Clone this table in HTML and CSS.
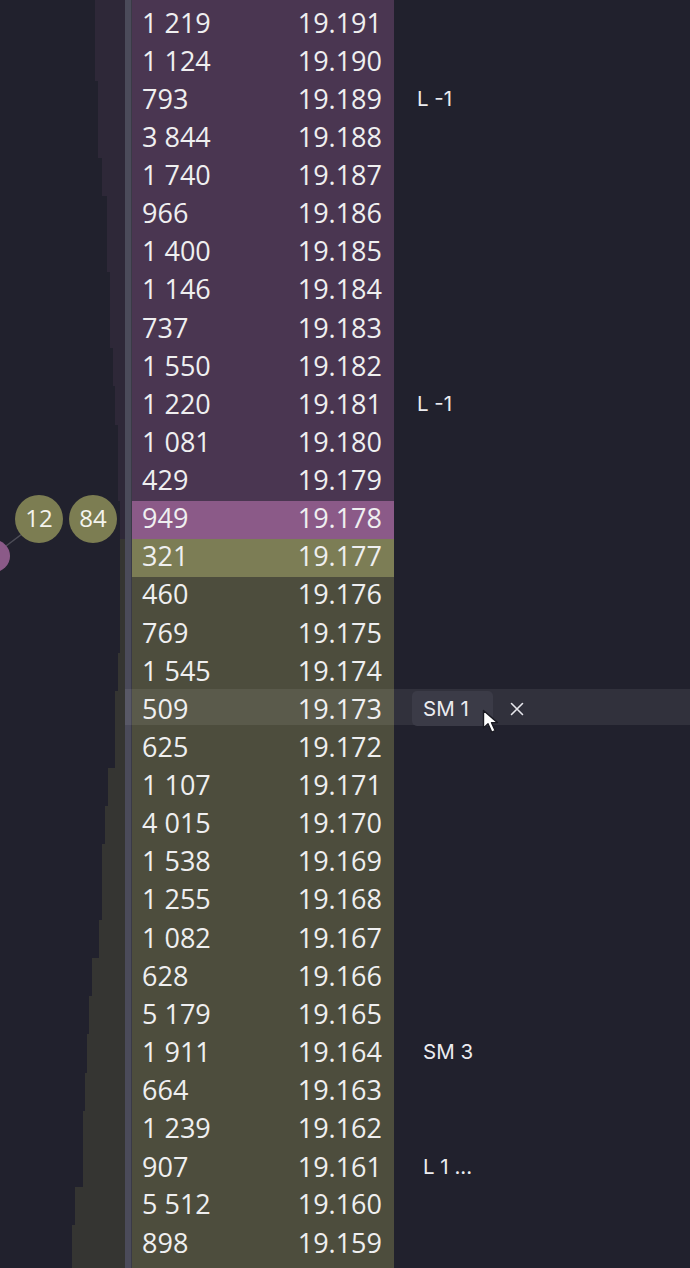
FILE: index.html
```html
<!DOCTYPE html>
<html>
<head>
<meta charset="utf-8">
<link rel="stylesheet" href="styles.css">
</head>
<body>
<div class="ladder">
  <div class="row edge ask"><div class="vp"><i class="bar" style="width:30px"></i></div><div class="axis"></div><div class="cells"></div><div class="note"></div></div>

  <div class="row ask"><div class="vp"><i class="bar" style="width:30px"></i></div><div class="axis"></div><div class="cells"><span>1 219</span><span>19.191</span></div><div class="note"></div></div>
  <div class="row ask"><div class="vp"><i class="bar" style="width:30px"></i></div><div class="axis"></div><div class="cells"><span>1 124</span><span>19.190</span></div><div class="note"></div></div>
  <div class="row ask"><div class="vp"><i class="bar" style="width:27px"></i></div><div class="axis"></div><div class="cells"><span>793</span><span>19.189</span></div><div class="note"><span class="label plain">L -1</span></div></div>
  <div class="row ask"><div class="vp"><i class="bar" style="width:27px"></i></div><div class="axis"></div><div class="cells"><span>3 844</span><span>19.188</span></div><div class="note"></div></div>
  <div class="row ask"><div class="vp"><i class="bar" style="width:23px"></i></div><div class="axis"></div><div class="cells"><span>1 740</span><span>19.187</span></div><div class="note"></div></div>
  <div class="row ask"><div class="vp"><i class="bar" style="width:18px"></i></div><div class="axis"></div><div class="cells"><span>966</span><span>19.186</span></div><div class="note"></div></div>
  <div class="row ask"><div class="vp"><i class="bar" style="width:18px"></i></div><div class="axis"></div><div class="cells"><span>1 400</span><span>19.185</span></div><div class="note"></div></div>
  <div class="row ask"><div class="vp"><i class="bar" style="width:15px"></i></div><div class="axis"></div><div class="cells"><span>1 146</span><span>19.184</span></div><div class="note"></div></div>
  <div class="row ask"><div class="vp"><i class="bar" style="width:15px"></i></div><div class="axis"></div><div class="cells"><span>737</span><span>19.183</span></div><div class="note"></div></div>
  <div class="row ask"><div class="vp"><i class="bar" style="width:12px"></i></div><div class="axis"></div><div class="cells"><span>1 550</span><span>19.182</span></div><div class="note"></div></div>
  <div class="row ask"><div class="vp"><i class="bar" style="width:10px"></i></div><div class="axis"></div><div class="cells"><span>1 220</span><span>19.181</span></div><div class="note"><span class="label plain">L -1</span></div></div>
  <div class="row ask"><div class="vp"><i class="bar" style="width:7px"></i></div><div class="axis"></div><div class="cells"><span>1 081</span><span>19.180</span></div><div class="note"></div></div>
  <div class="row ask"><div class="vp"><i class="bar" style="width:7px"></i></div><div class="axis"></div><div class="cells"><span>429</span><span>19.179</span></div><div class="note"></div></div>
  <div class="row ask best"><div class="vp"><i class="bar" style="width:5px"></i></div><div class="axis"></div><div class="cells"><span>949</span><span>19.178</span></div><div class="note"></div></div>
  <div class="row bid best"><div class="vp"><i class="bar" style="width:5px"></i></div><div class="axis"></div><div class="cells"><span>321</span><span>19.177</span></div><div class="note"></div></div>
  <div class="row bid"><div class="vp"><i class="bar" style="width:5px"></i></div><div class="axis"></div><div class="cells"><span>460</span><span>19.176</span></div><div class="note"></div></div>
  <div class="row bid"><div class="vp"><i class="bar" style="width:5px"></i></div><div class="axis"></div><div class="cells"><span>769</span><span>19.175</span></div><div class="note"></div></div>
  <div class="row bid"><div class="vp"><i class="bar" style="width:7px"></i></div><div class="axis"></div><div class="cells"><span>1 545</span><span>19.174</span></div><div class="note"></div></div>
  <div class="row bid hover"><div class="vp"><i class="bar" style="width:10px"></i></div><div class="axis"></div><div class="cells"><span>509</span><span>19.173</span></div><div class="note"><span class="label tag">SM 1</span><svg class="close" width="14" height="14" viewBox="0 0 14 14"><path d="M1.5 1.5L12.5 12.5M12.5 1.5L1.5 12.5" stroke="#e6e6ec" stroke-width="1.6" stroke-linecap="round"/></svg>
    <svg class="cursor" width="22" height="26" viewBox="0 0 22 26"><path d="M1.5 1.5 L1.5 19 L6 14.8 L9.8 23.2 L13.2 21.7 L9.5 13.6 L15.5 13.6 Z" fill="#ffffff" stroke="#1a1a22" stroke-width="1.4" stroke-linejoin="round"/></svg></div></div>
  <div class="row bid"><div class="vp"><i class="bar" style="width:10px"></i></div><div class="axis"></div><div class="cells"><span>625</span><span>19.172</span></div><div class="note"></div></div>
  <div class="row bid"><div class="vp"><i class="bar" style="width:17px"></i></div><div class="axis"></div><div class="cells"><span>1 107</span><span>19.171</span></div><div class="note"></div></div>
  <div class="row bid"><div class="vp"><i class="bar" style="width:20px"></i></div><div class="axis"></div><div class="cells"><span>4 015</span><span>19.170</span></div><div class="note"></div></div>
  <div class="row bid"><div class="vp"><i class="bar" style="width:23px"></i></div><div class="axis"></div><div class="cells"><span>1 538</span><span>19.169</span></div><div class="note"></div></div>
  <div class="row bid"><div class="vp"><i class="bar" style="width:23px"></i></div><div class="axis"></div><div class="cells"><span>1 255</span><span>19.168</span></div><div class="note"></div></div>
  <div class="row bid"><div class="vp"><i class="bar" style="width:26px"></i></div><div class="axis"></div><div class="cells"><span>1 082</span><span>19.167</span></div><div class="note"></div></div>
  <div class="row bid"><div class="vp"><i class="bar" style="width:33px"></i></div><div class="axis"></div><div class="cells"><span>628</span><span>19.166</span></div><div class="note"></div></div>
  <div class="row bid"><div class="vp"><i class="bar" style="width:36px"></i></div><div class="axis"></div><div class="cells"><span>5 179</span><span>19.165</span></div><div class="note"></div></div>
  <div class="row bid"><div class="vp"><i class="bar" style="width:38px"></i></div><div class="axis"></div><div class="cells"><span>1 911</span><span>19.164</span></div><div class="note"><span class="label">SM 3</span></div></div>
  <div class="row bid"><div class="vp"><i class="bar" style="width:40px"></i></div><div class="axis"></div><div class="cells"><span>664</span><span>19.163</span></div><div class="note"></div></div>
  <div class="row bid"><div class="vp"><i class="bar" style="width:42px"></i></div><div class="axis"></div><div class="cells"><span>1 239</span><span>19.162</span></div><div class="note"></div></div>
  <div class="row bid"><div class="vp"><i class="bar" style="width:42px"></i></div><div class="axis"></div><div class="cells"><span>907</span><span>19.161</span></div><div class="note"><span class="label">L 1 ...</span></div></div>
  <div class="row bid"><div class="vp"><i class="bar" style="width:50px"></i></div><div class="axis"></div><div class="cells"><span>5 512</span><span>19.160</span></div><div class="note"></div></div>
  <div class="row bid"><div class="vp"><i class="bar" style="width:53px"></i></div><div class="axis"></div><div class="cells"><span>898</span><span>19.159</span></div><div class="note"></div></div>
  <div class="row edge bid"><div class="vp"><i class="bar" style="width:53px"></i></div><div class="axis"></div><div class="cells"></div><div class="note"></div></div>
</div>

<div class="marks">
  <svg class="link" width="40" height="40" viewBox="0 0 40 40"><path d="M4 26 L20 14" stroke="#4e4e58" stroke-width="1.5"/></svg>
  <div class="dot pink"></div>
  <div class="dot olive d12">12</div>
  <div class="dot olive d84">84</div>
</div>
</body>
</html>
```
FILE: styles.css
```css
html, body {
  margin: 0;
  padding: 0;
}
body {
  width: 690px;
  height: 1268px;
  overflow: hidden;
  background: #21212d;
  position: relative;
  font-family: "Open Sans", "Noto Sans", sans-serif;
}
.ladder {
  display: flex;
  flex-direction: column;
}
.row {
  position: relative;
  display: grid;
  grid-template-columns: 125px 7px 262px 1fr;
  height: 38.125px;
}
.row.edge {
  height: 5px;
}
.vp {
  display: flex;
  justify-content: flex-end;
}
.bar {
  display: block;
  height: 100%;
}
.ask .bar { background: #2e2838; }
.bid .bar { background: #353532; }
.axis {
  background: #4b4b5a;
  box-shadow: inset -1px 0 0 #3a3a46;
}
.cells {
  display: flex;
  justify-content: space-between;
  align-items: center;
  padding: 0 12px 4px 10px;
  color: #efeff0;
  font-size: 27px;
  line-height: 1;
  white-space: pre;
}
.ask .cells { background: #4a3651; }
.bid .cells { background: #4d4d3d; }
.ask.best .cells { background: #8b5a88; }
.bid.best .cells { background: #7c7d55; }
.row.hover::before {
  content: "";
  position: absolute;
  left: 125px;
  right: 0;
  top: -2px;
  bottom: 4px;
  background: rgba(255, 255, 255, 0.075);
  pointer-events: none;
}
.note {
  position: relative;
  display: flex;
  align-items: center;
  padding: 0 0 4px 18px;
  font-family: "Inter", "Liberation Sans", sans-serif;
  font-size: 20.5px;
  color: #ececf0;
}
.label {
  padding: 0 11px;
  line-height: 35px;
  border-radius: 5px;
}
.label.plain {
  padding: 0 5px;
}
.label.tag {
  padding: 0 24px 0 11px;
  background: #3b3b47;
}
.close {
  margin-left: 17px;
}
.cursor {
  position: absolute;
  left: 88px;
  top: 18px;
}
.marks {
  position: absolute;
  left: 0;
  top: 0;
}
.link {
  position: absolute;
  left: 2px;
  top: 520px;
}
.dot {
  position: absolute;
  width: 48px;
  height: 48px;
  border-radius: 50%;
  display: flex;
  align-items: center;
  justify-content: center;
  color: #f4f4ee;
  font-size: 24px;
  line-height: 1;
  padding-bottom: 2px;
  box-sizing: border-box;
}
.dot.olive { background: #7c7d52; }
.dot.pink {
  background: #8b5a88;
  width: 32px;
  height: 32px;
  left: -22px;
  top: 540px;
}
.d12 { left: 15px; top: 495px; }
.d84 { left: 69px; top: 495px; }
```
